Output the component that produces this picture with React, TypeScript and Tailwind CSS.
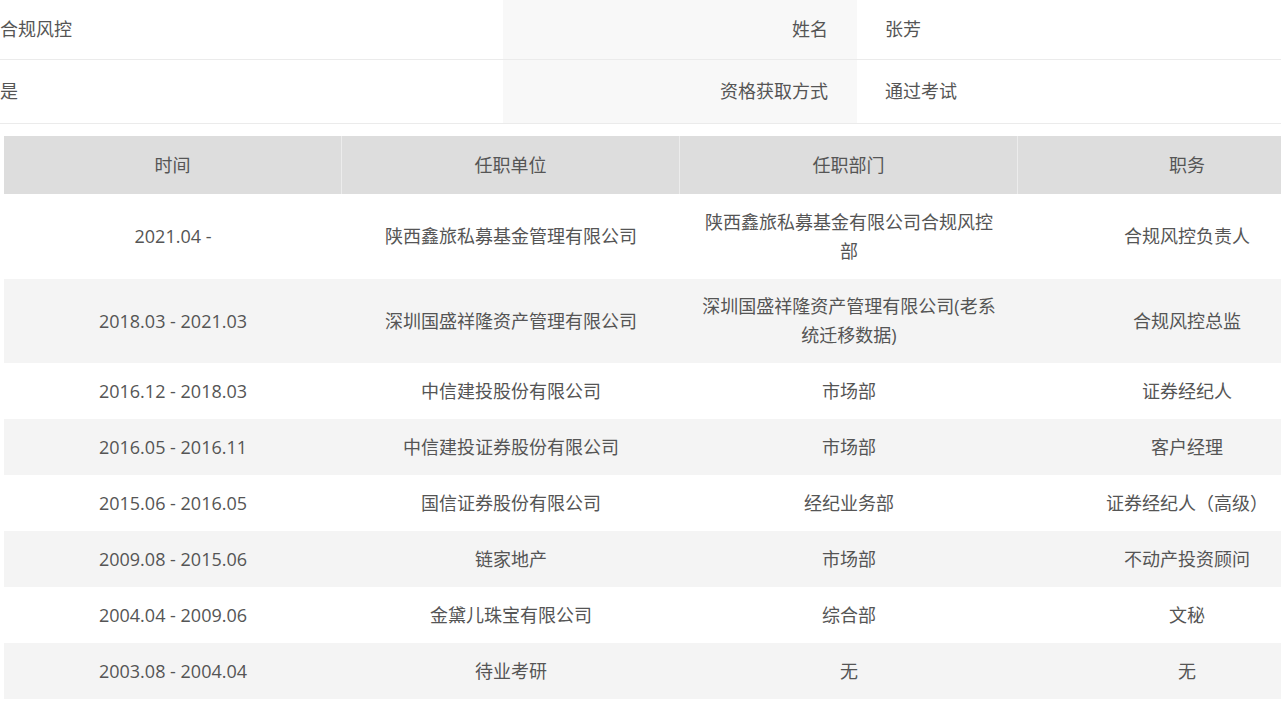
const rows: [string, string, string, string, number][] = [
  ["2021.04 -", "陕西鑫旅私募基金管理有限公司", "陕西鑫旅私募基金有限公司合规风控部", "合规风控负责人", 85],
  ["2018.03 - 2021.03", "深圳国盛祥隆资产管理有限公司", "深圳国盛祥隆资产管理有限公司(老系统迁移数据)", "合规风控总监", 84],
  ["2016.12 - 2018.03", "中信建投股份有限公司", "市场部", "证券经纪人", 56],
  ["2016.05 - 2016.11", "中信建投证券股份有限公司", "市场部", "客户经理", 56],
  ["2015.06 - 2016.05", "国信证券股份有限公司", "经纪业务部", "证券经纪人（高级）", 56],
  ["2009.08 - 2015.06", "链家地产", "市场部", "不动产投资顾问", 56],
  ["2004.04 - 2009.06", "金黛儿珠宝有限公司", "综合部", "文秘", 56],
  ["2003.08 - 2004.04", "待业考研", "无", "无", 56],
];

export default function App() {
  return (
    <div className="w-[1281px] h-[704px] overflow-hidden bg-white text-[18px] text-[#555]" style={{ fontFamily: '"Open Sans","Noto Sans CJK SC",sans-serif' }}>
      <div className="flex h-[60px] border-b border-[#ebebeb]">
        <div className="w-[503px] flex items-center">合规风控</div>
        <div className="w-[354px] flex items-center justify-end pr-[29px] bg-[#f8f8f8]">姓名</div>
        <div className="flex-1 flex items-center pl-[28px]">张芳</div>
      </div>
      <div className="flex h-[64px] border-b border-[#ebebeb]">
        <div className="w-[503px] flex items-center">是</div>
        <div className="w-[354px] flex items-center justify-end pr-[29px] bg-[#f8f8f8]">资格获取方式</div>
        <div className="flex-1 flex items-center pl-[28px]">通过考试</div>
      </div>
      <div className="ml-[4px] mt-[12px] w-[1352px]">
        <div className="flex h-[58px] bg-[#dddddd]">
          {["时间", "任职单位", "任职部门", "职务"].map((h, i) => (
            <div key={h} className={`w-[338px] flex items-center justify-center ${i < 3 ? "border-r border-[#ececec]" : ""}`}>{h}</div>
          ))}
        </div>
        {rows.map((r, i) => (
          <div key={i} className={`flex ${i % 2 ? "bg-[#f4f4f4]" : "bg-white"}`} style={{ height: r[4] }}>
            {r.slice(0, 4).map((c, j) => (
              <div key={j} className="w-[338px] flex items-center justify-center text-center px-[22px] leading-[29px]">{c as string}</div>
            ))}
          </div>
        ))}
      </div>
    </div>
  );
}
